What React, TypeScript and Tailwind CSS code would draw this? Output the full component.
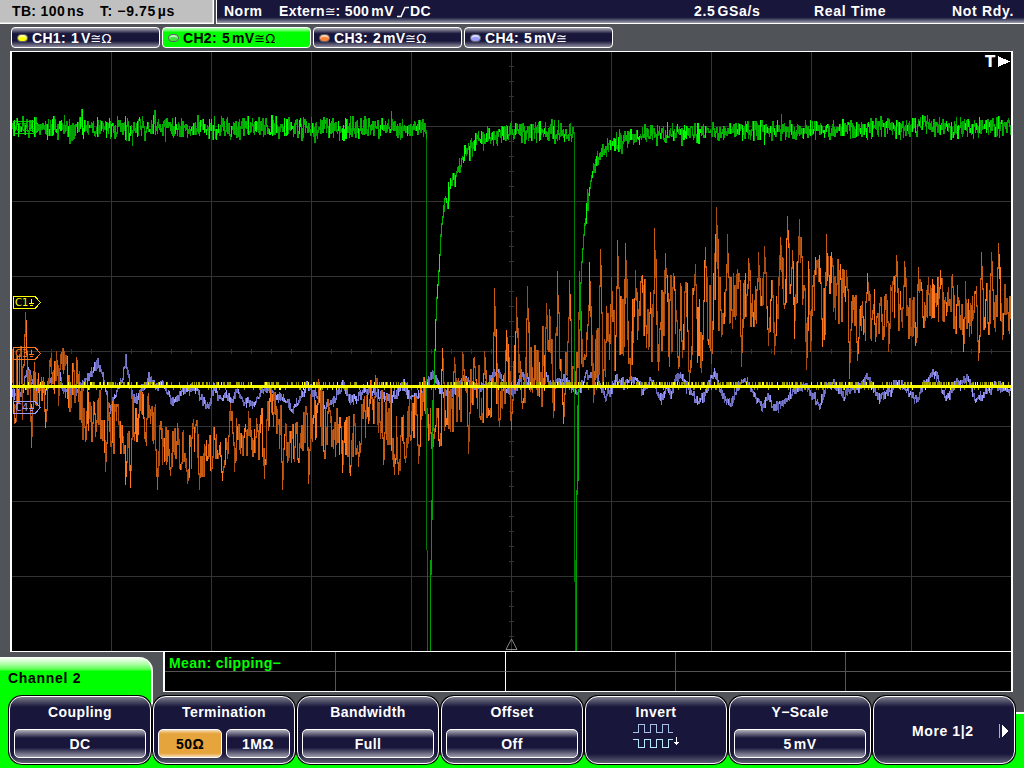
import React from 'react';

type Point = [number, number];
type Span = [number, number, number];

const PLOT_LEFT = 12;
const PLOT_RIGHT = 1011;
const PLOT_TOP = 52;

const createRandom = (seed: number) => {
  let state = seed;
  return () => {
    state = (state + 0x6d2b79f5) | 0;
    let t = Math.imul(state ^ (state >>> 15), 1 | state);
    t = (t + Math.imul(t ^ (t >>> 7), 61 | t)) ^ t;
    return ((t ^ (t >>> 14)) >>> 0) / 4294967296;
  };
};

const interpolate = (points: Point[], x: number) => {
  for (let i = 1; i < points.length; i++) {
    if (x <= points[i][0]) {
      const [x0, y0] = points[i - 1];
      const [x1, y1] = points[i];
      return y0 + ((y1 - y0) * (x - x0)) / (x1 - x0);
    }
  }
  return points[points.length - 1][1];
};

const ch2Left: Point[] = [[12, 128], [426, 128]];
const ch2Middle: Point[] = [
  [432, 430], [433, 385], [434, 350], [435, 320], [436, 298], [437, 285], [438, 272],
  [439, 255], [440, 235], [441, 224], [443, 210], [446, 201], [450, 186], [455, 175], [460, 161], [465, 153],
  [475, 143], [485, 138], [500, 134], [510, 132], [573, 132],
];
const ch2Right: Point[] = [
  [577, 480], [578, 390], [579, 330], [580, 283], [581, 262], [582, 248], [583, 235], [585, 215],
  [587, 200], [590, 178], [594, 168], [600, 156], [610, 146], [625, 140], [650, 135], [700, 131], [780, 130],
  [840, 130], [880, 127], [1011, 128],
];

const ch4Points: Point[] = [
  [12, 395], [20, 393], [27, 368], [35, 388], [45, 390], [57, 370], [62, 388], [75, 392], [90, 375], [97, 363],
  [102, 375], [107, 400], [110, 410], [118, 385], [122, 378], [125, 360], [130, 390], [134, 402], [140, 392],
  [148, 377], [155, 385], [162, 384], [172, 402], [182, 392], [195, 388], [203, 402], [208, 408], [213, 387],
  [220, 400], [225, 393], [230, 402], [237, 391], [244, 402], [253, 405], [260, 393], [268, 388], [274, 397],
  [283, 398], [292, 410], [300, 398], [306, 386], [315, 395], [325, 408], [334, 400], [342, 384], [350, 400],
  [358, 398], [363, 389], [372, 392], [385, 398], [390, 400], [402, 386], [410, 397], [420, 395], [427, 379],
  [433, 376], [440, 392], [448, 397], [455, 390], [464, 377], [470, 385], [480, 390], [490, 378], [497, 368],
  [503, 385], [513, 393], [522, 373], [530, 385], [538, 388], [545, 377], [552, 385], [560, 379], [567, 382],
  [577, 393], [585, 375], [596, 375], [600, 385], [605, 397], [610, 390], [615, 379], [625, 383], [635, 378],
  [642, 392], [650, 380], [655, 388], [661, 401], [666, 388], [670, 394], [675, 379], [680, 376], [687, 388],
  [697, 402], [704, 395], [714, 370], [722, 398], [730, 404], [738, 386], [745, 380], [752, 392], [762, 408],
  [766, 396], [772, 407], [785, 400], [795, 390], [805, 384], [812, 396], [819, 405], [825, 388], [832, 383],
  [842, 396], [852, 387], [860, 388], [866, 375], [873, 390], [880, 399], [890, 387], [900, 385], [910, 394],
  [917, 401], [922, 386], [932, 371], [938, 382], [946, 398], [955, 385], [968, 379], [975, 402], [985, 393],
  [995, 385], [1003, 388], [1011, 390],
];

// top and bottom of the channel 3 noise band, one pair for every 10 px
const ch3Band: Point[] = [
  [350, 425], [355, 420], [365, 410], [362, 415], [360, 425], [355, 415], [368, 412], [375, 440], [380, 435],
  [395, 450], [405, 460], [405, 448], [395, 455], [385, 440], [400, 455], [420, 472], [422, 470], [430, 465],
  [425, 470], [425, 474], [432, 472], [430, 462], [418, 455], [410, 452], [425, 460], [412, 458], [395, 445],
  [410, 455], [425, 462], [415, 455], [392, 445], [385, 450], [412, 458], [405, 462], [410, 465], [400, 450],
  [380, 430], [390, 440], [395, 455], [410, 465], [390, 435], [378, 420], [400, 450], [385, 440], [385, 440],
  [365, 415], [362, 412], [368, 418], [370, 415], [355, 410], [350, 405], [350, 410], [340, 405], [330, 400],
  [335, 395], [330, 390], [345, 385], [340, 380], [320, 385], [305, 375], [310, 365], [300, 365], [285, 370],
  [280, 350], [295, 355], [280, 360], [285, 370], [290, 360], [280, 365], [270, 360], [255, 335], [265, 330],
  [270, 330], [270, 320], [285, 325], [275, 320], [280, 325], [255, 305], [245, 295], [250, 310], [250, 310],
  [275, 345], [260, 325], [265, 320], [285, 325], [290, 335], [285, 335], [290, 338], [280, 330], [295, 340],
  [290, 340], [285, 330], [280, 325], [285, 335], [280, 330], [285, 325], [290, 340], [295, 345], [280, 330],
  [285, 325], [290, 330],
];

const ch3Spikes: Point[] = [
  [14, 423], [25, 313], [31, 447], [45, 427], [49, 361], [56, 352], [60, 355], [64, 352], [76, 358], [85, 441],
  [105, 471], [117, 405], [125, 484], [130, 487], [148, 394], [157, 489], [170, 475], [177, 424], [187, 483],
  [199, 489], [211, 471], [222, 480], [230, 404], [234, 471], [248, 412], [256, 419], [264, 478], [270, 391],
  [282, 489], [308, 483], [318, 380], [328, 400], [342, 472], [350, 475], [358, 466], [375, 376], [383, 464],
  [394, 474], [398, 474], [405, 462], [418, 463], [428, 440], [433, 446], [439, 446], [442, 349], [445, 426],
  [454, 358], [462, 353], [468, 453], [474, 358], [484, 352], [489, 414], [494, 289], [499, 426], [506, 331],
  [511, 429], [516, 298], [522, 408], [527, 287], [532, 392], [546, 304], [549, 310], [553, 417], [557, 272],
  [563, 423], [569, 281], [573, 368], [579, 272], [583, 360], [589, 263], [593, 402], [600, 250], [611, 278],
  [617, 241], [625, 244], [630, 379], [635, 271], [641, 277], [654, 229], [658, 370], [665, 254], [673, 274],
  [678, 368], [685, 283], [689, 390], [695, 265], [701, 372], [705, 248], [711, 363], [716, 208], [721, 336],
  [727, 235], [741, 366], [748, 259], [758, 253], [764, 247], [768, 345], [774, 354], [780, 238], [787, 217],
  [794, 338], [799, 220], [806, 369], [810, 351], [816, 261], [819, 256], [826, 235], [831, 253], [849, 378],
  [857, 360], [867, 274], [888, 351], [896, 256], [904, 262], [915, 345], [918, 268], [940, 271], [963, 351],
  [978, 360], [981, 253], [991, 253], [998, 244], [1002, 339],
];

// joins the samples of one pixel column to the last sample of the column before
const toSpans = (samples: Point[]): Span[] => {
  const spans: Span[] = [];
  let previous = samples[0][1];
  for (const [x, y] of samples) {
    const last = spans[spans.length - 1];
    const top = Math.min(previous, y);
    const bottom = Math.max(previous, y);
    if (last && last[0] === x) {
      last[1] = Math.min(last[1], top);
      last[2] = Math.max(last[2], bottom);
    } else {
      spans.push([x, top, bottom]);
    }
    previous = y;
  }
  return spans;
};

const noisyCurve = (points: Point[], noise: number, steepBelow: number, seed: number) => {
  const random = createRandom(seed);
  const result: Point[] = [];
  for (let x = points[0][0]; x <= points[points.length - 1][0]; x++) {
    const base = interpolate(points, x);
    for (let i = 0; i < 2; i++) {
      let amount = noise;
      if (base > steepBelow) amount = 1;
      else if (random() < 0.06) amount = noise * 1.5;
      result.push([x, Math.round(base + (random() + random() - 1) * amount)]);
    }
  }
  return result;
};

const buildCh3 = () => {
  const random = createRandom(77);
  const spikes = new Map(ch3Spikes);
  const result: Point[] = [];
  let level = 0.5;
  for (let x = PLOT_LEFT; x < PLOT_RIGHT; x++) {
    const position = (x - PLOT_LEFT) / 10;
    const index = Math.min(Math.floor(position), ch3Band.length - 2);
    const t = position - index;
    const high = ch3Band[index][0] * (1 - t) + ch3Band[index + 1][0] * t;
    const low = ch3Band[index][1] * (1 - t) + ch3Band[index + 1][1] * t;
    for (let i = 0; i < 2; i++) {
      level = level * 0.3 + random() * 0.7;
      let y = high + (low - high) * Math.min(1.1, Math.max(-0.1, (level - 0.5) * 1.5 + 0.5));
      if (spikes.has(x)) y = i === 0 ? spikes.get(x)! : spikes.get(x)! * 0.8 + y * 0.2;
      else if (spikes.has(x - 1)) y = spikes.get(x - 1)! * 0.5 + y * 0.5;
      else if (spikes.has(x + 1)) y = spikes.get(x + 1)! * 0.5 + y * 0.5;
      result.push([x, Math.round(y)]);
    }
  }
  return result;
};

const buildCh1 = () => {
  const random = createRandom(9);
  const result: Span[] = [];
  let density = 0.4;
  for (let x = PLOT_LEFT; x < PLOT_RIGHT; x++) {
    if (x % 12 === 0) density = 0.15 + random() * 0.5;
    const value = random();
    if (value < density) result.push([x, 383, 385]);
    else if (value < density + 0.14) result.push([x, 388, 389]);
  }
  return result;
};

const ch2Spans = [
  ...toSpans(noisyCurve(ch2Left, 13, 230, 5)),
  ...toSpans(noisyCurve(ch2Middle, 12, 215, 18)),
  ...toSpans(noisyCurve(ch2Right, 12, 215, 31)),
];
const ch3Spans = toSpans(buildCh3());
const ch4Spans = toSpans(noisyCurve(ch4Points, 6, 999, 44));
const ch1Spans = buildCh1();

const Trace = ({ spans, shades, seed }: { spans: Span[]; shades: string[]; seed: number }) => {
  const random = createRandom(seed);
  return (
    <g>
      {spans.map(([x, top, bottom]) => {
        const value = random();
        const shade = value < 0.45 ? shades[0] : value < 0.65 ? shades[1] : shades[2];
        return <rect key={x} x={x} y={top - 1} width={1} height={bottom - top + 2} fill={shade} />;
      })}
    </g>
  );
};

const range = (count: number) => Array.from({ length: count }, (_, i) => i);

const Graticule = () => (
  <g fill="#333333">
    {range(9).map((i) => (
      <rect key={i} x={111 + i * 100} y={PLOT_TOP} width={1} height={599} />
    ))}
    {range(7).map((i) => (
      <rect key={i} x={PLOT_LEFT} y={126 + i * 75} width={999} height={1} />
    ))}
    {range(49).map((i) => (
      <rect key={i} x={31 + i * 20} y={349} width={1} height={5} />
    ))}
    {range(39).map((i) => (
      <rect key={i} x={509} y={66 + i * 15} width={5} height={1} />
    ))}
  </g>
);

const GroundMarker = ({ y, name, color }: { y: number; name: string; color: string }) => (
  <g transform={`translate(13 ${y})`} stroke={color} fill="none">
    <path d="M0.5 0.5H22L27.5 6.5L22 12.5H0.5Z" />
    <path d="M18.5 3V7.5M16 7.5H21M17 9.5H20" />
    <text x={2} y={10} stroke="none" fill={color} fontSize={10} fontFamily="DejaVu Sans, sans-serif">
      {name}
    </text>
  </g>
);

const Plot = () => (
  <svg className="block" width={999} height={599} viewBox="12 52 999 599" shapeRendering="crispEdges">
    <Graticule />
    <Trace spans={ch4Spans} shades={['#7878cc', '#9a9aff', '#6464b4']} seed={1} />
    <Trace spans={ch3Spans} shades={['#c85c12', '#ff7820', '#a84c12']} seed={2} />
    <g fill="#007d00">
      <rect x={426} y={130} width={1} height={420} />
      <rect x={427} y={550} width={1} height={101} />
      <rect x={574} y={132} width={1} height={450} />
      <rect x={575} y={560} width={1} height={91} />
    </g>
    <g fill="#00a000">
      <rect x={430} y={560} width={1} height={91} />
      <rect x={431} y={500} width={1} height={75} />
      <rect x={432} y={400} width={1} height={120} />
      <rect x={576} y={490} width={1} height={161} />
      <rect x={577} y={405} width={1} height={90} />
    </g>
    <Trace spans={ch2Spans} shades={['#00b400', '#00ff00', '#00a000']} seed={3} />
    <Trace spans={ch1Spans} shades={['#a8a800', '#ffff00', '#8c8c00']} seed={4} />
    <rect x={PLOT_LEFT} y={385} width={999} height={3} fill="#ffff00" />
    <GroundMarker y={121} name="C2" color="#00d000" />
    <GroundMarker y={296} name="C1" color="#ffff00" />
    <GroundMarker y={347} name="C3" color="#ff7820" />
    <GroundMarker y={401} name="C4" color="#9a9aff" />
    <path d="M511.5 639L517 649.5H506Z" fill="none" stroke="#888888" shapeRendering="auto" />
    <text x={985} y={67} fill="#ffffff" fontSize={15} fontWeight={700} fontFamily="DejaVu Sans, sans-serif">
      T
    </text>
    <path d={`M998 56L${PLOT_RIGHT - 1} 61.5L998 67Z`} fill="#ffffff" />
  </svg>
);

const Coupling = ({ text, className = '' }: { text: string; className?: string }) => (
  <span className={`font-['DejaVu_Sans',sans-serif] text-[13px] font-normal ${className}`}>{text}</span>
);

const StatusBar = () => (
  <div className="flex h-6 gap-[2px] text-sm/[23px] font-bold whitespace-pre">
    <div className="flex w-[214px] border-r border-b border-white bg-[#c0c0c0] pl-3 tracking-[0.35px] text-black shadow-[inset_-1px_-1px_#dddddd]">
      <span className="w-[88px]">TB: 100<span className="ml-[2px]">ns</span></span>
      <span className="tracking-[0.6px]">T: −9.75<span className="ml-[2px]">µs</span></span>
    </div>
    <div className="flex flex-1 border-b border-l border-white bg-linear-to-b from-[#18163a] from-75% to-[#a0a0ac] pl-[7px] text-white">
      <span className="w-[55px] tracking-[0.5px]">Norm</span>
      <span className="flex w-[415px] tracking-[0.4px]">
        Extern<Coupling text="≅" className="tracking-[-0.5px]" />: 500<span className="ml-[2px]">mV</span>
        <svg className="mt-[6px] mr-px ml-[3px]" width={12} height={12} fill="none" stroke="white" strokeWidth={1.5}>
          <path d="M0 10.5H4L8 1.5H12" />
        </svg>
        DC
      </span>
      <span className="w-[120px] tracking-[0.65px]">2.5<span className="ml-[2px]">GSa/s</span></span>
      <span className="w-[138px] tracking-[0.7px]">Real Time</span>
      <span className="tracking-[0.7px]">Not Rdy.</span>
    </div>
  </div>
);

const channels = [
  { name: 'CH1:', value: '1', unit: 'V', coupling: '≅Ω', dot: 'bg-[#ffff00]', active: false },
  { name: 'CH2:', value: '5', unit: 'mV', coupling: '≅Ω', dot: 'bg-[#40e040]', active: true },
  { name: 'CH3:', value: '2', unit: 'mV', coupling: '≅Ω', dot: 'bg-[#ff8030]', active: false },
  { name: 'CH4:', value: '5', unit: 'mV', coupling: '≅', dot: 'bg-[#9a9aff]', active: false },
];

const ChannelBar = () => (
  <div className="flex h-[27px] gap-[2px] pt-[3px] pl-[11px]">
    {channels.map((channel) => (
      <div
        key={channel.name}
        className={`flex h-[21px] w-[149px] items-center rounded-[4px] border border-white pl-[5px] text-sm font-bold tracking-[0.3px] ${
          channel.active
            ? 'bg-linear-to-b from-[#b0ffb0] via-[#00ff00] via-20% to-[#00ff00] text-black'
            : 'bg-[linear-gradient(#a8a8b4,#18163a_30%,#18163a_68%,#8c8c9c)] text-white'
        }`}
      >
        <span
          className={`mr-[4px] h-2 w-[11px] rounded-full border border-[#606068] shadow-[inset_0_2px_1px_#ffffffaa] ${channel.dot}`}
        />
        <span>{channel.name}</span>
        <span className="ml-[5px]">{channel.value}</span>
        <span className="ml-[2px]">{channel.unit}</span>
        <Coupling text={channel.coupling} className="mt-[3px] tracking-normal" />
      </div>
    ))}
  </div>
);

const Measurements = () => (
  <div className="ml-[163px] grid h-10 w-[850px] grid-cols-[171px_170px_170px_170px_1fr] grid-rows-[20px_19px] border-r-2 border-b border-l-2 border-white bg-black">
    {range(10).map((i) => (
      <div
        key={i}
        className={`${i < 5 ? 'border-b border-b-[#555555]' : ''} ${i % 5 < 4 ? 'border-r' : ''} ${
          i % 5 === 1 ? 'border-r-white' : 'border-r-[#555555]'
        }`}
      >
        {i === 0 && (
          <span className="block pl-1 text-sm/[22px] font-bold tracking-[0.4px] whitespace-nowrap text-[#00ff00]">
            Mean: clipping−
          </span>
        )}
      </div>
    ))}
  </div>
);

const Field = ({ children, active = false }: { children: React.ReactNode; active?: boolean }) => (
  <div
    className={`flex h-[29px] flex-1 items-center justify-center rounded-[5px] border border-white ${
      active
        ? 'bg-[linear-gradient(#f4dcb8,#e6a43c_14%,#e6a43c_86%,#f4dcb8)] text-black'
        : 'bg-[linear-gradient(#b0b0bc,#18163a_30%,#18163a_65%,#9c9cac)]'
    }`}
  >
    {children}
  </div>
);

const SoftKey = ({ title, children }: { title: string; children: React.ReactNode }) => (
  <div className="h-[70px] w-[144px] rounded-[14px] bg-black p-px">
    <div className="flex h-full flex-col rounded-[13px] border border-white bg-[linear-gradient(#7c7c8c,#18163a_15%,#18163a_86%,#606074)] px-1">
      <div className="pt-[5px] text-center leading-5">{title}</div>
      <div className="mt-[7px] flex gap-1">{children}</div>
    </div>
  </div>
);

const InvertIcon = () => (
  <svg className="mx-auto mt-[-6px]" width={46} height={27} fill="none" shapeRendering="crispEdges">
    <path d="M0 9.5H5.5V1.5H11.5V9.5H17.5V1.5H23.5V9.5H29.5V1.5H35.5V9.5H40" stroke="#a8c0e8" />
    <path d="M0 16.5H5.5V24.5H11.5V16.5H17.5V24.5H23.5V16.5H29.5V24.5H35.5V16.5H40" stroke="#b8e8f8" />
    <path d="M43.5 14V21" stroke="white" />
    <path d="M41 19H46L43.5 22Z" fill="white" />
  </svg>
);

const ChannelMenu = () => (
  <div className="relative flex pl-2 text-sm font-bold tracking-[0.45px] text-white">
    <SoftKey title="Coupling">
      <Field>DC</Field>
    </SoftKey>
    <SoftKey title="Termination">
      <Field active>50Ω</Field>
      <Field>1MΩ</Field>
    </SoftKey>
    <SoftKey title="Bandwidth">
      <Field>Full</Field>
    </SoftKey>
    <SoftKey title="Offset">
      <Field>Off</Field>
    </SoftKey>
    <SoftKey title="Invert">
      <InvertIcon />
    </SoftKey>
    <SoftKey title="Y−Scale">
      <Field>5<span className="ml-[2px]">mV</span></Field>
    </SoftKey>
    <div className="h-[70px] w-[144px] rounded-[14px] bg-black p-px">
      <div className="flex h-full items-center rounded-[13px] border border-white bg-[linear-gradient(#7c7c8c,#18163a_15%,#18163a_86%,#606074)] pt-[2px] pl-[38px]">
        <span className="w-[87px] tracking-[0.6px] whitespace-nowrap">More 1|2</span>
        <svg width={10} height={16} shapeRendering="crispEdges">
          <path d="M0.5 1V15" stroke="#b0b0bc" />
          <path d="M3 2L9 8L3 14Z" fill="white" />
        </svg>
      </div>
    </div>
  </div>
);

const App = () => {
  return (
    <div className="flex h-[768px] w-[1024px] flex-col overflow-hidden bg-[#505458] font-['Liberation_Sans',sans-serif]">
      <StatusBar />
      <ChannelBar />
      <div className="ml-[10px] h-[601px] w-[1003px] border-x-2 border-y border-white bg-black">
        <Plot />
      </div>
      <Measurements />
      <div className="relative h-[76px] pt-[3px]">
        <div className="absolute top-[-35px] left-0 h-[111px] w-[153px] rounded-tr-[14px] border-r-2 border-white bg-linear-to-b from-white to-[#00ff00] to-[14px]">
          <span className="block pt-[10px] pl-2 text-sm/[22px] font-bold tracking-[0.7px] text-black">Channel 2</span>
        </div>
        <div className="absolute bottom-0 left-0 h-[13px] w-full bg-[#00ff00]" />
        <div className="absolute right-0 bottom-0 h-14 w-[10px] border-t-2 border-white bg-[#00ff00]" />
        <ChannelMenu />
      </div>
    </div>
  );
};

export default App;
